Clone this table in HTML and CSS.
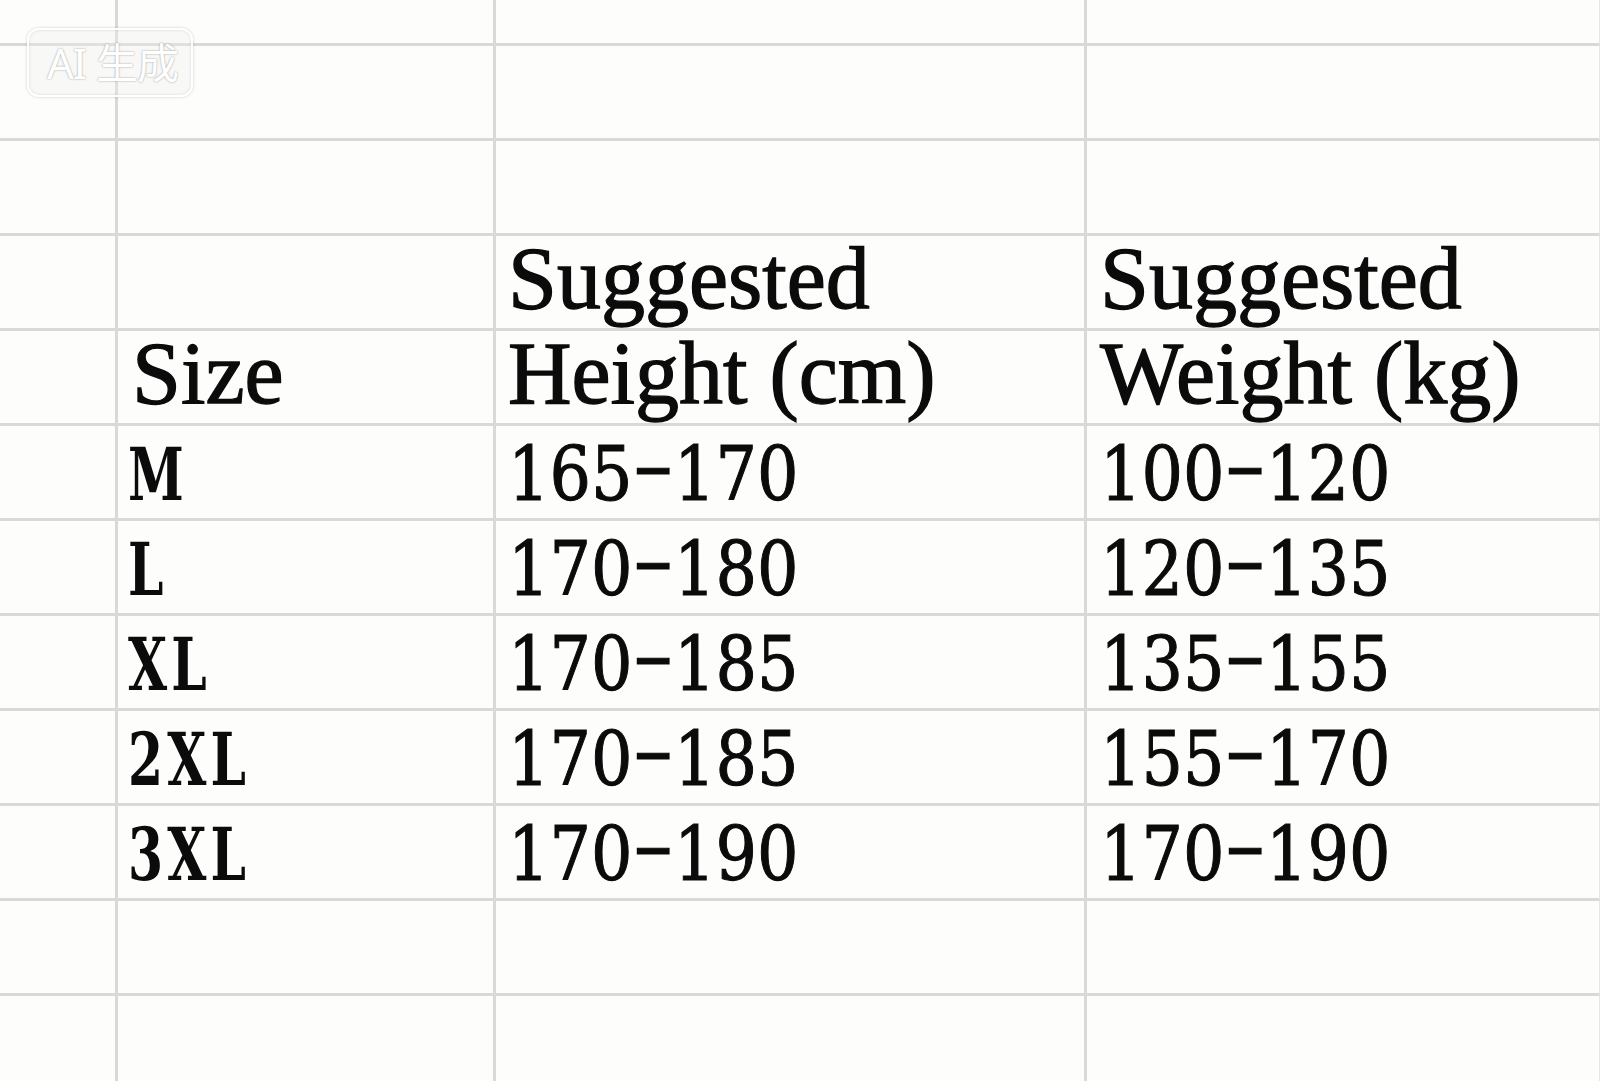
FILE: index.html
```html
<!DOCTYPE html>
<html lang="en">
<head>
<meta charset="utf-8">
<title>Size chart</title>
<link rel="stylesheet" href="styles.css">
</head>
<body>
<div class="sheet">
  <div class="cell"></div><div class="cell"></div><div class="cell"></div><div class="cell last"></div>
  <div class="cell"></div><div class="cell"></div><div class="cell"></div><div class="cell last"></div>
  <div class="cell"></div><div class="cell"></div><div class="cell"></div><div class="cell last"></div>
  <div class="cell"></div><div class="cell"></div><div class="cell head c2">Suggested</div><div class="cell last head c3">Suggested</div>
  <div class="cell"></div><div class="cell head c1">Size</div><div class="cell head c2">Height (cm)</div><div class="cell last head c3">Weight (kg)</div>
  <div class="cell"></div><div class="cell size c1"><span class="t">M</span></div><div class="cell data c2"><span class="t">165<span class="dash">-</span>170</span></div><div class="cell last data c3"><span class="t">100<span class="dash">-</span>120</span></div>
  <div class="cell"></div><div class="cell size c1"><span class="t">L</span></div><div class="cell data c2"><span class="t">170<span class="dash">-</span>180</span></div><div class="cell last data c3"><span class="t">120<span class="dash">-</span>135</span></div>
  <div class="cell"></div><div class="cell size c1"><span class="t">XL</span></div><div class="cell data c2"><span class="t">170<span class="dash">-</span>185</span></div><div class="cell last data c3"><span class="t">135<span class="dash">-</span>155</span></div>
  <div class="cell"></div><div class="cell size c1"><span class="t">2XL</span></div><div class="cell data c2"><span class="t">170<span class="dash">-</span>185</span></div><div class="cell last data c3"><span class="t">155<span class="dash">-</span>170</span></div>
  <div class="cell"></div><div class="cell size c1"><span class="t">3XL</span></div><div class="cell data c2"><span class="t">170<span class="dash">-</span>190</span></div><div class="cell last data c3"><span class="t">170<span class="dash">-</span>190</span></div>
  <div class="cell"></div><div class="cell"></div><div class="cell"></div><div class="cell last"></div>
  <div class="cell"></div><div class="cell"></div><div class="cell"></div><div class="cell last"></div>
</div>
<div class="badge">AI 生成</div>
</body>
</html>
```
FILE: styles.css
```css
html, body {
  margin: 0;
  padding: 0;
  background: #fdfdfc;
  overflow: hidden;
}
body {
  width: 1600px;
  height: 1081px;
  position: relative;
}
.sheet {
  display: grid;
  grid-template-columns: 118px 378px 591px 513px;
  grid-template-rows: 46px repeat(11, 95px);
  height: 1081px;
  overflow: hidden;
}
.cell {
  box-sizing: border-box;
  border-right: 3px solid #d9d9d8;
  border-bottom: 3px solid #d9d9d8;
  display: flex;
  align-items: flex-end;
  overflow: visible;
  white-space: nowrap;
  color: #0b0b0b;
  position: relative;
}
.cell.last {
  border-right: 1px solid #e6e6e6;
}
.head {
  font-family: "Liberation Serif", "Times New Roman", serif;
  font-size: 88px;
  line-height: 1;
  padding-bottom: 5px;
  -webkit-text-stroke: 1.3px #0b0b0b;
  z-index: 1;
}
.head.c1 { padding-left: 14px; }
.data {
  font-family: "DejaVu Serif", "Liberation Serif", serif;
  font-size: 75px;
  line-height: 1;
  padding-bottom: 6px;
  -webkit-text-stroke: 1.1px #0b0b0b;
}
.data .t {
  display: inline-block;
  transform: scaleX(0.87);
  transform-origin: left bottom;
}
.dash {
  display: inline-block;
  width: 0.636em;
  text-align: center;
  transform: translateY(-9px) scaleX(1.9);
}
.size {
  font-family: "DejaVu Serif", "Liberation Serif", serif;
  font-weight: bold;
  font-size: 72px;
  line-height: 1;
  padding-bottom: 7px;
  letter-spacing: 6px;
}
.size .t {
  display: inline-block;
  transform: scaleX(0.7);
  transform-origin: left bottom;
}
.c1 { padding-left: 10px; }
.c2 { padding-left: 12px; }
.c3 { padding-left: 13px; }
.badge {
  position: absolute;
  left: 27px;
  top: 28px;
  width: 166px;
  height: 69px;
  box-sizing: border-box;
  border: 2px solid rgba(255, 255, 255, 0.95);
  border-radius: 12px;
  background: rgba(238, 238, 238, 0.35);
  box-shadow: 0 0 3px rgba(0, 0, 0, 0.2), inset 0 0 3px rgba(0, 0, 0, 0.14);
  color: #ffffff;
  font-family: "Noto Sans", "Noto Sans CJK SC", sans-serif;
  font-size: 42px;
  line-height: 65px;
  padding-left: 18px;
  text-shadow: 0 0 2px rgba(0, 0, 0, 0.4);
  letter-spacing: -1px;
}
```
